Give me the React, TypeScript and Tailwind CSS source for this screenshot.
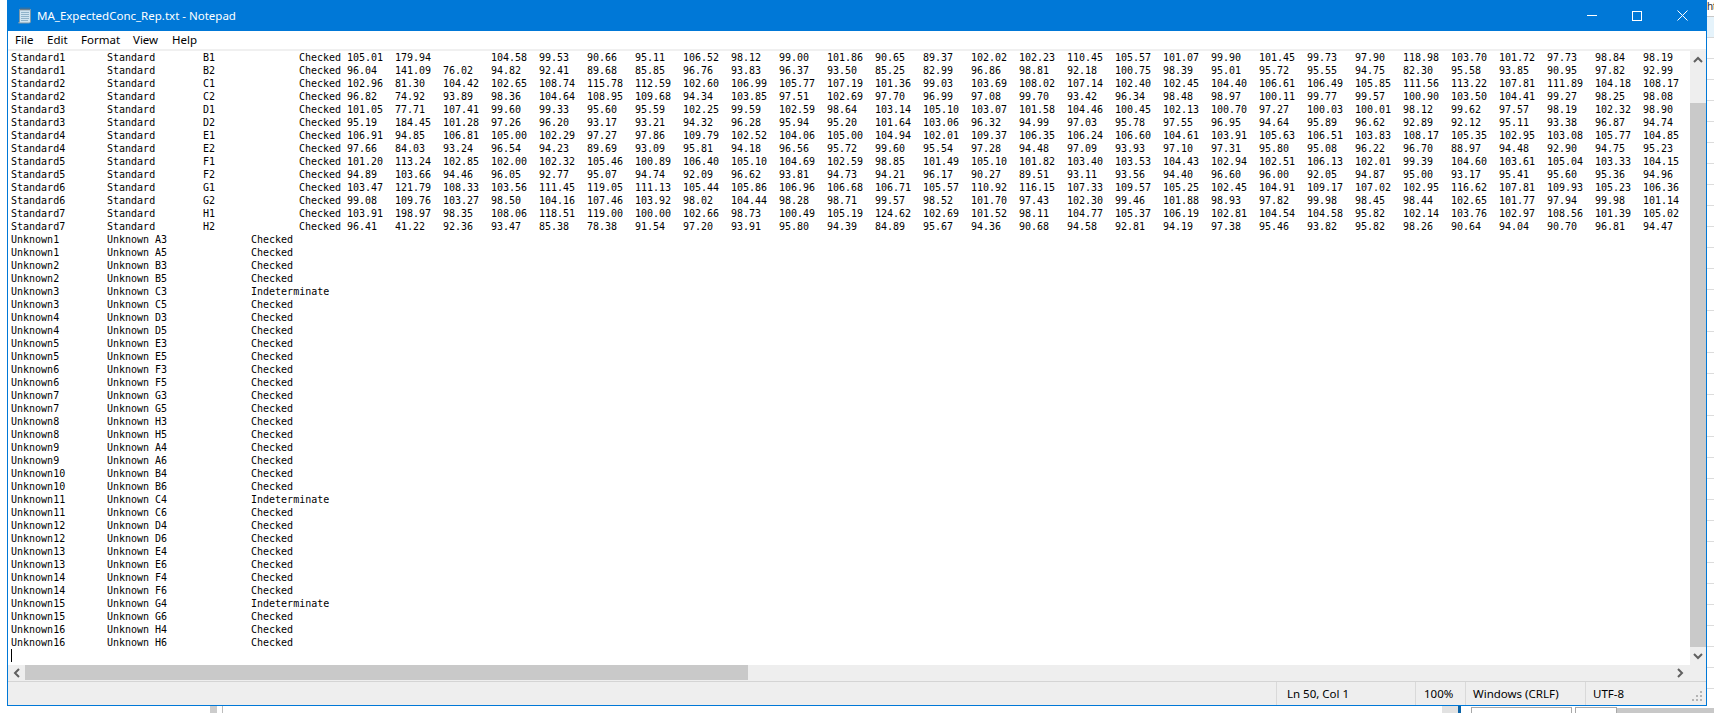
const uiFont = "font-['Noto_Sans','Open_Sans',sans-serif]";

const standards: [string, string, string][] = [
  ["Standard1", "B1", "105.01 179.94  104.58 99.53 90.66 95.11 106.52 98.12 99.00 101.86 90.65 89.37 102.02 102.23 110.45 105.57 101.07 99.90 101.45 99.73 97.90 118.98 103.70 101.72 97.73 98.84 98.19"],
  ["Standard1", "B2", "96.04 141.09 76.02 94.82 92.41 89.68 85.85 96.76 93.83 96.37 93.50 85.25 82.99 96.86 98.81 92.18 100.75 98.39 95.01 95.72 95.55 94.75 82.30 95.58 93.85 90.95 97.82 92.99"],
  ["Standard2", "C1", "102.96 81.30 104.42 102.65 108.74 115.78 112.59 102.60 106.99 105.77 107.19 101.36 99.03 103.69 108.02 107.14 102.40 102.45 104.40 106.61 106.49 105.85 111.56 113.22 107.81 111.89 104.18 108.17"],
  ["Standard2", "C2", "96.82 74.92 93.89 98.36 104.64 108.95 109.68 94.34 103.85 97.51 102.69 97.70 96.99 97.08 99.70 93.42 96.34 98.48 98.97 100.11 99.77 99.57 100.90 103.50 104.41 99.27 98.25 98.08"],
  ["Standard3", "D1", "101.05 77.71 107.41 99.60 99.33 95.60 95.59 102.25 99.59 102.59 98.64 103.14 105.10 103.07 101.58 104.46 100.45 102.13 100.70 97.27 100.03 100.01 98.12 99.62 97.57 98.19 102.32 98.90"],
  ["Standard3", "D2", "95.19 184.45 101.28 97.26 96.20 93.17 93.21 94.32 96.28 95.94 95.20 101.64 103.06 96.32 94.99 97.03 95.78 97.55 96.95 94.64 95.89 96.62 92.89 92.12 95.11 93.38 96.87 94.74"],
  ["Standard4", "E1", "106.91 94.85 106.81 105.00 102.29 97.27 97.86 109.79 102.52 104.06 105.00 104.94 102.01 109.37 106.35 106.24 106.60 104.61 103.91 105.63 106.51 103.83 108.17 105.35 102.95 103.08 105.77 104.85"],
  ["Standard4", "E2", "97.66 84.03 93.24 96.54 94.23 89.69 93.09 95.81 94.18 96.56 95.72 99.60 95.54 97.28 94.48 97.09 93.93 97.10 97.31 95.80 95.08 96.22 96.70 88.97 94.48 92.90 94.75 95.23"],
  ["Standard5", "F1", "101.20 113.24 102.85 102.00 102.32 105.46 100.89 106.40 105.10 104.69 102.59 98.85 101.49 105.10 101.82 103.40 103.53 104.43 102.94 102.51 106.13 102.01 99.39 104.60 103.61 105.04 103.33 104.15"],
  ["Standard5", "F2", "94.89 103.66 94.46 96.05 92.77 95.07 94.74 92.09 96.62 93.81 94.73 94.21 96.17 90.27 89.51 93.11 93.56 94.40 96.60 96.00 92.05 94.87 95.00 93.17 95.41 95.60 95.36 94.96"],
  ["Standard6", "G1", "103.47 121.79 108.33 103.56 111.45 119.05 111.13 105.44 105.86 106.96 106.68 106.71 105.57 110.92 116.15 107.33 109.57 105.25 102.45 104.91 109.17 107.02 102.95 116.62 107.81 109.93 105.23 106.36"],
  ["Standard6", "G2", "99.08 109.76 103.27 98.50 104.16 107.46 103.92 98.02 104.44 98.28 98.71 99.57 98.52 101.70 97.43 102.30 99.46 101.88 98.93 97.82 99.98 98.45 98.44 102.65 101.77 97.94 99.98 101.14"],
  ["Standard7", "H1", "103.91 198.97 98.35 108.06 118.51 119.00 100.00 102.66 98.73 100.49 105.19 124.62 102.69 101.52 98.11 104.77 105.37 106.19 102.81 104.54 104.58 95.82 102.14 103.76 102.97 108.56 101.39 105.02"],
  ["Standard7", "H2", "96.41 41.22 92.36 93.47 85.38 78.38 91.54 97.20 93.91 95.80 94.39 84.89 95.67 94.36 90.68 94.58 92.81 94.19 97.38 95.46 93.82 95.82 98.26 90.64 94.04 90.70 96.81 94.47"],
];

const unknownWells = "A3 A5 B3 B5 C3 C5 D3 D5 E3 E5 F3 F5 G3 G5 H3 H5 A4 A6 B4 B6 C4 C6 D4 D6 E4 E6 F4 F6 G4 G6 H4 H6".split(" ");
const indeterminate = ["C3", "C4", "G4"];

const lines = [
  ...standards.map(([name, well, values]) => `${name}\tStandard\t${well}\t\tChecked\t${values.split(" ").join("\t")}`),
  ...unknownWells.map((well, i) => `Unknown${Math.floor(i / 2) + 1}\tUnknown\t${well}\t\t${indeterminate.includes(well) ? "Indeterminate" : "Checked"}`),
];

const menuItems = [
  { label: "File", cls: "w-[32px]" },
  { label: "Edit", cls: "w-[34px]" },
  { label: "Format", cls: "w-[52px]" },
  { label: "View", cls: "w-[39px]" },
  { label: "Help", cls: "" },
];

const statusCells = [
  { label: "Ln 50, Col 1", cls: "w-[139px] pl-[10px]" },
  { label: "100%", cls: "w-[50px] pl-[8px]" },
  { label: "Windows (CRLF)", cls: "w-[120px] pl-[7px]" },
];

function NotepadIcon() {
  return (
    <svg width="16" height="17" viewBox="0 0 16 17" className="shrink-0">
      <path d="M2.5 2.5h11v12.5l-1 1h-11l1-1z" fill="#cfe4f0" stroke="#7f98a8" />
      <path d="M4 5.5h8M4 7.5h8M4 9.5h8M4 11.5h8M4 13.5h7" stroke="#8fb3c9" />
      <path d="M4 .5v3M6 .5v3M8 .5v3M10 .5v3M12 .5v3" stroke="#5d6b76" />
    </svg>
  );
}

function Chevron({ points, w, h }: { points: string; w: number; h: number }) {
  return (
    <svg width={w} height={h} viewBox={`0 0 ${w} ${h}`}>
      <polyline points={points} fill="none" stroke="#606060" strokeWidth="2" />
    </svg>
  );
}

function TitleBar() {
  return (
    <div className={`flex h-[31px] shrink-0 items-center bg-[#0078d7] pl-[9px] text-white ${uiFont}`}>
      <NotepadIcon />
      <span className="ml-[4px] text-[11.5px] whitespace-pre">MA_ExpectedConc_Rep.txt - Notepad</span>
      <div className="ml-auto flex h-full items-center">
        <div className="h-px w-[10px] bg-white" />
        <div className="ml-[35px] h-[10px] w-[10px] border border-white" />
        <svg width="11" height="11" viewBox="0 0 11 11" className="ml-[35px] mr-[18px]">
          <path d="M.5.5l10 10M10.5.5l-10 10" stroke="#fff" fill="none" />
        </svg>
      </div>
    </div>
  );
}

function MenuBar() {
  return (
    <div className={`flex h-[18px] shrink-0 items-center bg-white pl-[7px] text-[11.5px] text-black ${uiFont}`}>
      {menuItems.map((item) => (
        <span key={item.label} className={item.cls}>
          {item.label}
        </span>
      ))}
    </div>
  );
}

function Editor() {
  return (
    <div className="min-w-0 flex-1 overflow-hidden bg-white pl-[3px] font-['DejaVu_Sans_Mono',monospace] text-[10px] leading-[13px] text-black [tab-size:48px]">
      {lines.map((line, i) => (
        <div key={i} className="h-[13px] whitespace-pre">
          {line}
        </div>
      ))}
      <div className="h-[13px] w-px bg-black" />
    </div>
  );
}

function VerticalScrollbar() {
  return (
    <div className="flex w-[16px] shrink-0 flex-col bg-[#eeeeee]">
      <div className="flex h-[17px] shrink-0 items-center justify-center">
        <Chevron w={10} h={7} points="1,6 5,2 9,6" />
      </div>
      <div className="h-[35px] shrink-0" />
      <div className="min-h-0 flex-1 bg-[#c9c9c9]" />
      <div className="flex h-[18px] shrink-0 items-center justify-center">
        <Chevron w={10} h={7} points="1,1 5,5 9,1" />
      </div>
    </div>
  );
}

function HorizontalScrollbar() {
  return (
    <div className="flex h-[16px] shrink-0 items-start bg-[#eeeeee]">
      <div className="flex h-[15px] w-[17px] shrink-0 items-center justify-center">
        <Chevron w={7} h={10} points="6,1 2,5 6,9" />
      </div>
      <div className="h-[15px] w-[723px] bg-[#c9c9c9]" />
      <div className="ml-auto mr-[17px] flex h-[15px] w-[18px] items-center justify-center">
        <Chevron w={7} h={10} points="1,1 5,5 1,9" />
      </div>
    </div>
  );
}

function StatusBar() {
  return (
    <div className={`flex h-[24px] shrink-0 items-center border-t border-[#d4d4d4] bg-[#eeeeee] text-[11.5px] text-black ${uiFont}`}>
      <div className="w-[1268px] shrink-0" />
      {statusCells.map((cell) => (
        <div key={cell.label} className={`flex h-full shrink-0 items-center border-l border-[#d9d9d9] whitespace-pre ${cell.cls}`}>
          {cell.label}
        </div>
      ))}
      <div className="flex h-full w-[121px] shrink-0 items-center justify-between border-l border-[#d9d9d9] pl-[7px] whitespace-pre">
        UTF-8
        <svg width="12" height="12" viewBox="0 0 12 12" className="mt-[9px] mr-[2px] self-start">
          <path d="M8 0h2v2H8zM4 4h2v2H4zM8 4h2v2H8zM0 8h2v2H0zM4 8h2v2H4zM8 8h2v2H8z" fill="#b4b4b4" />
        </svg>
      </div>
    </div>
  );
}

function RightStrip() {
  return (
    <div className="flex w-[7px] shrink-0 flex-col overflow-hidden bg-white">
      <div className="h-[17px] shrink-0 overflow-hidden border-b border-[#c8c8c8] font-['Liberation_Sans',sans-serif] text-[11px] leading-[12px] text-[#333]">ht</div>
      <div className="h-[21px] shrink-0 border-b border-[#d8d8d8] bg-[#e5f3fb]" />
      {Array.from({ length: 32 }).map((_, i) => (
        <div key={i} className="h-[21px] shrink-0 border-b border-[#dcdcdc]" />
      ))}
    </div>
  );
}

function BottomStrip() {
  return (
    <div className="flex h-[7px] shrink-0 bg-white">
      <div className="w-[210px] shrink-0" />
      <div className="w-[7px] shrink-0 bg-[#cccccc]" />
      <div className="w-[5px] shrink-0" />
      <div className="w-px shrink-0 bg-[#bcbcbc]" />
      <div className="w-[1219px] shrink-0" />
      <div className="w-[16px] shrink-0 bg-[#e2e2e2]" />
      <div className="w-[3px] shrink-0 bg-[#0a63a8]" />
      <div className="w-[10px] shrink-0" />
      <div className="mt-[1px] w-[101px] shrink-0 border-x border-t border-[#a8a8a8]" />
      <div className="w-[3px] shrink-0" />
      <div className="mt-[1px] w-[42px] shrink-0 border-x border-t border-[#a8a8a8]" />
      <div className="mt-[2px] flex-1 bg-[#c8c8c8]" />
    </div>
  );
}

export default function App() {
  return (
    <div className="flex h-[713px] w-[1714px] flex-col overflow-hidden bg-white">
      <div className="flex h-[706px] shrink-0">
        <div className="w-[7px] shrink-0" />
        <div className="flex w-[1700px] shrink-0 flex-col border-x border-b border-[#0078d7]">
          <TitleBar />
          <MenuBar />
          <div className="h-[2px] shrink-0 bg-[#f0f0f0]" />
          <div className="flex min-h-0 flex-1">
            <Editor />
            <VerticalScrollbar />
          </div>
          <HorizontalScrollbar />
          <StatusBar />
        </div>
        <RightStrip />
      </div>
      <BottomStrip />
    </div>
  );
}
